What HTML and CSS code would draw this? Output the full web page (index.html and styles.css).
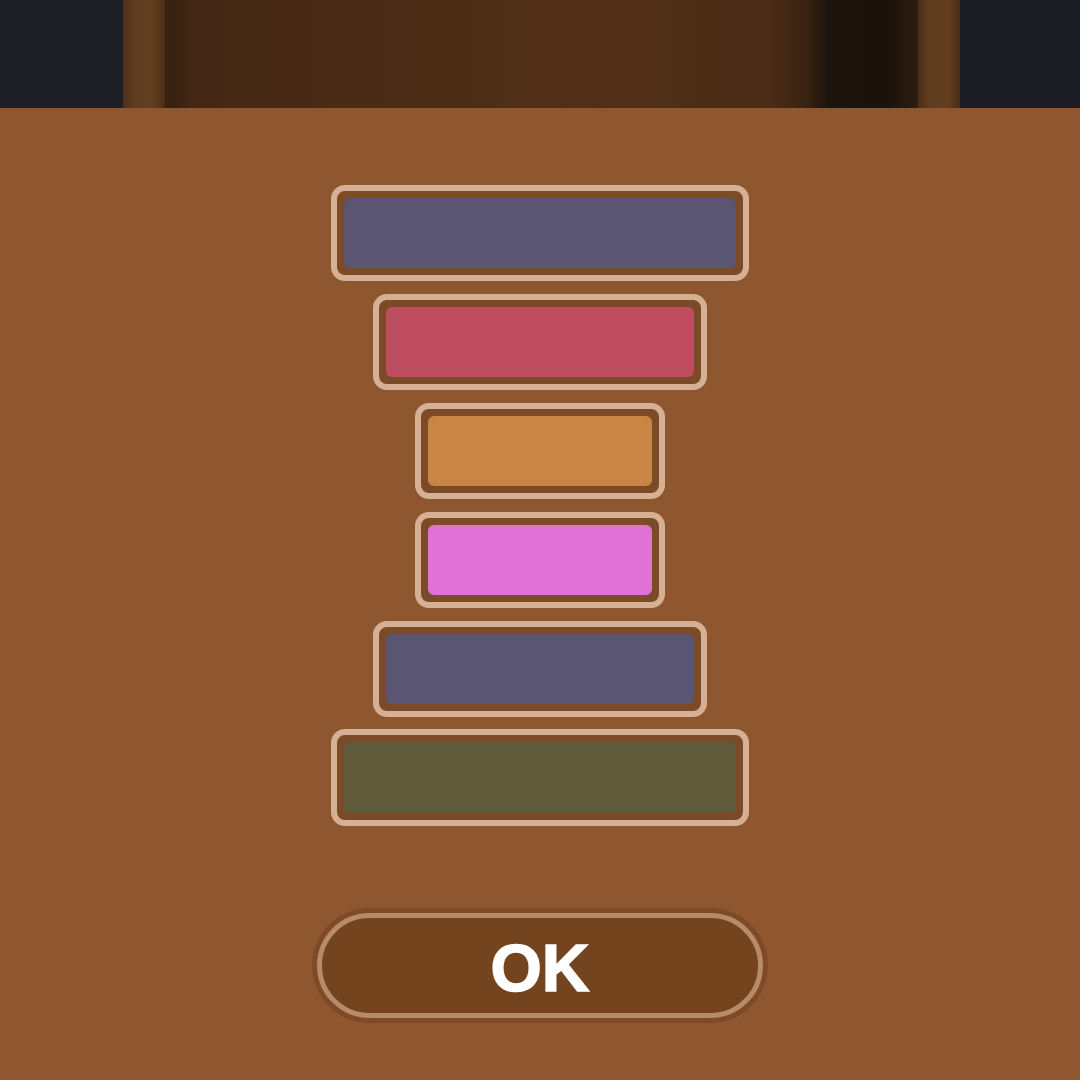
FILE: index.html
```html
<!DOCTYPE html>
<html lang="en">
<head>
<meta charset="utf-8">
<title>Stack</title>
<link rel="stylesheet" href="styles.css">
</head>
<body>
  <header class="shelf">
    <div class="shelf-side"></div>
    <div class="shelf-post"></div>
    <div class="shelf-back"></div>
    <div class="shelf-post"></div>
    <div class="shelf-side"></div>
  </header>
  <main class="panel">
    <div class="stack">
      <div class="block block-xl"><div class="fill fill-slate"></div></div>
      <div class="block block-lg"><div class="fill fill-rose"></div></div>
      <div class="block block-md"><div class="fill fill-amber"></div></div>
      <div class="block block-md"><div class="fill fill-orchid"></div></div>
      <div class="block block-lg"><div class="fill fill-slate"></div></div>
      <div class="block block-xl"><div class="fill fill-olive"></div></div>
    </div>
    <button class="ok" type="button">OK</button>
  </main>
</body>
</html>
```
FILE: styles.css
```css
html, body {
  margin: 0;
  padding: 0;
}

body {
  width: 1080px;
  height: 1080px;
  overflow: hidden;
  background: #8f5730;
  font-family: "Liberation Sans", Arial, sans-serif;
}

/* wooden shelf strip along the top edge */
.shelf {
  display: flex;
  height: 108px;
  box-shadow: inset 0 -2px 0 rgba(40, 20, 8, 0.55);
}

.shelf-side {
  width: 123px;
  background: #1c1f26;
}

.shelf-side:last-child {
  width: 120px;
  background: #1a1d24;
}

.shelf-post {
  width: 42px;
  background: linear-gradient(90deg, #4a2e18 0%, #5f3c1e 25%, #633f20 70%, #4a2d17 100%);
}

.shelf-back {
  flex: 1;
  background:
    linear-gradient(90deg,
      #35200f 0%,
      #432714 4%,
      #4b2c16 30%,
      #522f17 55%,
      #4c2c17 80%,
      #3a2312 85%,
      #1d140d 88%,
      #1b120c 96%,
      #2e1d10 100%);
}

/* main panel */
.panel {
  display: flex;
  flex-direction: column;
  align-items: center;
  padding-top: 77px;
}

.stack {
  display: flex;
  flex-direction: column;
  align-items: center;
  gap: 12.6px;
}

.block {
  box-sizing: border-box;
  height: 96.3px;
  border: 6px solid #d5b094;
  border-radius: 14px;
  background: #7b4a27;
  padding: 7px;
}

.block-xl { width: 418px; }
.block-lg { width: 334px; }
.block-md { width: 250px; }

.fill {
  height: 100%;
  border-radius: 6px;
}

.fill-slate  { background: #5a5573; }
.fill-rose   { background: #bf4d62; }
.fill-amber  { background: #c98544; }
.fill-orchid { background: #e072d6; }
.fill-olive  { background: #5f5a3a; }

/* confirm button */
.ok {
  box-sizing: border-box;
  width: 446px;
  height: 105px;
  margin-top: 87px;
  border: 5px solid #b78a69;
  border-radius: 53px;
  background: #74441f;
  box-shadow: 0 0 0 5px #7f4a26;
  color: #ffffff;
  font-family: "Liberation Sans", Arial, sans-serif;
  font-weight: 700;
  font-size: 66px;
  letter-spacing: 0;
  -webkit-text-stroke: 1.5px #ffffff;
  line-height: 1;
  padding: 5px 0 0 0;
  cursor: pointer;
}
```
